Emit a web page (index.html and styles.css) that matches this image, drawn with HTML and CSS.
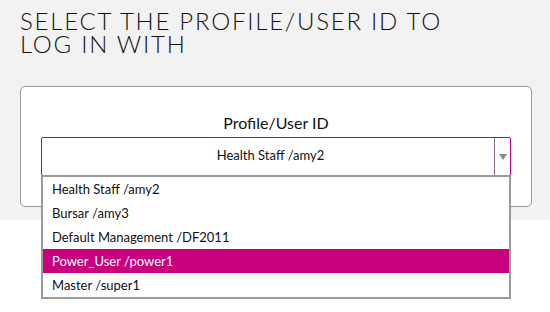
FILE: index.html
```html
<!DOCTYPE html>
<html lang="en">
<head>
    <meta charset="UTF-8">
    <title>Select profile</title>
    <link rel="stylesheet" href="styles.css">
</head>
<body>
    <div class="panel">
        <h1 class="title">SELECT THE PROFILE/USER ID TO<br>LOG IN WITH</h1>

        <div class="card">
            <label class="field-label">Profile/User ID</label>
            <div class="select-wrap">
                <div class="select">
                    <span class="select-value">Health Staff /amy2</span>
                    <span class="select-arrow"></span>
                </div>
                <ul class="options">
                    <li>Health Staff /amy2</li>
                    <li>Bursar /amy3</li>
                    <li>Default Management /DF2011</li>
                    <li class="active">Power_User /power1</li>
                    <li>Master /super1</li>
                </ul>
            </div>
        </div>
    </div>
</body>
</html>
```

FILE: styles.css
```css
html, body {
    min-height: 312px;
}

body {
    margin: 0;
    padding: 0;
    background-color: #fff;
    font-family: Lato, "Open Sans", sans-serif;
    color: #111;
}

.panel {
    background-color: #f2f2f2;
    height: 220px;
    padding: 0 18px 0 20px;
    box-sizing: border-box;
}

.title {
    margin: 0;
    padding-top: 9px;
    font-size: 24px;
    line-height: 23px;
    font-weight: 300;
    letter-spacing: 1.75px;
    color: #111;
}

.card {
    margin-top: 31px;
    background-color: #fff;
    border: 1px solid #9a9a9a;
    border-radius: 5px;
    padding: 26px 20px 30px;
    display: flex;
    flex-direction: column;
    align-items: center;
}

.field-label {
    font-size: 16px;
    line-height: 20px;
    margin-bottom: 4px;
    color: #111;
}

.select-wrap {
    position: relative;
    width: 100%;
}

.select {
    display: flex;
    height: 39px;
    border: 1px solid #c4007c;
    border-radius: 2px;
    box-sizing: border-box;
}

.select-value {
    flex: 1;
    display: flex;
    align-items: center;
    justify-content: center;
    font-size: 13px;
    padding: 0 0 4px 5px;
}

.select-arrow {
    width: 15px;
    border-left: 1px solid #8c6a84;
    display: flex;
    align-items: center;
    justify-content: center;
}

.select-arrow::after {
    content: "";
    border-left: 4px solid transparent;
    border-right: 4px solid transparent;
    border-top: 6px solid #8a8a8a;
}

.options {
    position: absolute;
    top: 38px;
    left: 0;
    right: 0;
    margin: 0;
    padding: 0;
    list-style: none;
    background-color: #fff;
    border: 2px solid #9c9c9c;
    z-index: 2;
}

.options li {
    height: 24px;
    line-height: 24px;
    padding-left: 9px;
    font-size: 13px;
    color: #111;
}

.options li.active {
    background-color: #c8007d;
    color: #fff;
}
```
